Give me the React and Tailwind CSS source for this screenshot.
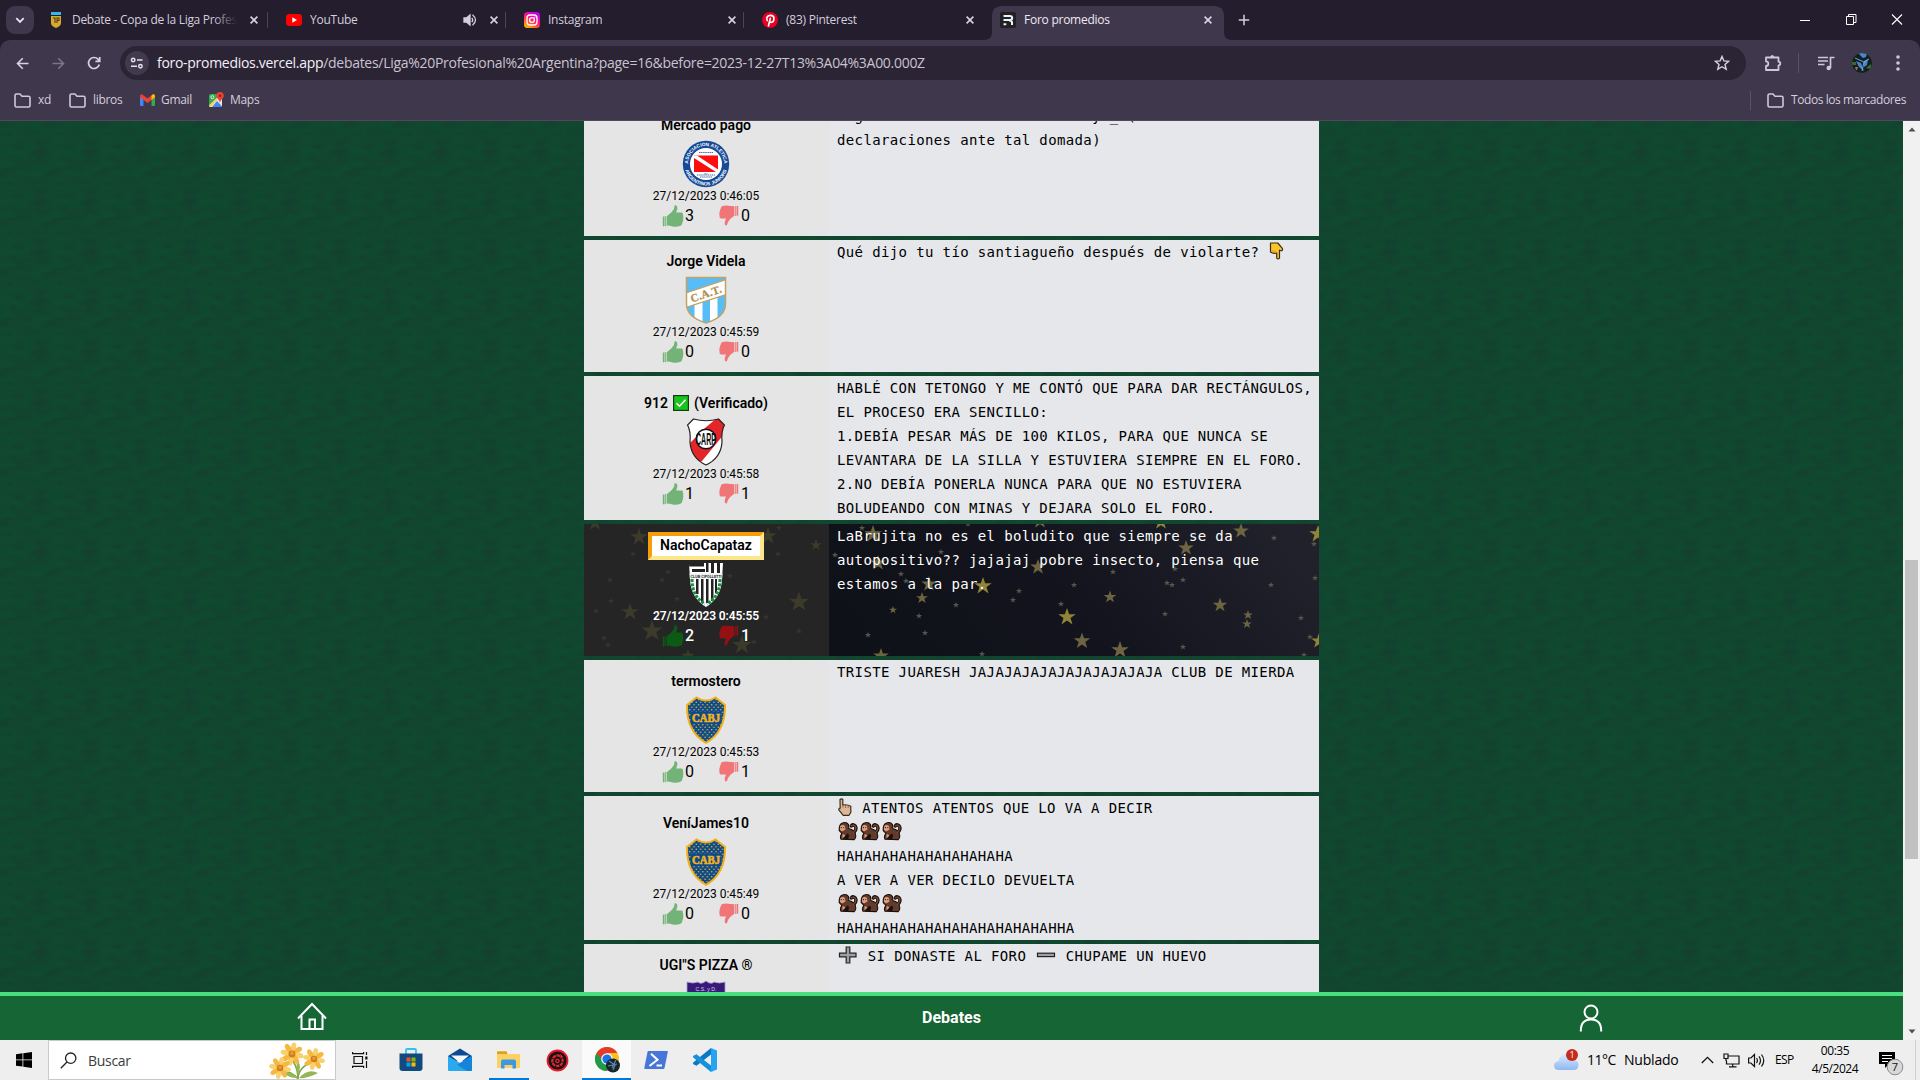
import React from "react";

/* ---------- browser chrome ---------- */

const FAVICONS = {
  liga: (
    <svg width="12" height="16" viewBox="0 0 12 16">
      <rect x="1" y="0" width="10" height="3" fill="#35b6e6" />
      <path d="M1 4h10v7q0 3-5 5q-5-2-5-5z" fill="#d9a92c" />
      <path d="M3 6h2v5M7 11V6h2v2.500H7" stroke="#4b3f1c" strokeWidth="1.1" fill="none" />
    </svg>
  ),
  youtube: (
    <svg width="16" height="16" viewBox="0 0 16 16">
      <rect x="0" y="2" width="16" height="12" rx="3.4" fill="#f00" />
      <path d="M6.3 5.2v5.6L11 8z" fill="#fff" />
    </svg>
  ),
  instagram: (
    <svg width="16" height="16" viewBox="0 0 16 16">
      <defs>
        <linearGradient id="ig" x1="0.1" y1="1" x2="0.7" y2="0">
          <stop offset="0" stopColor="#ffc800" />
          <stop offset="0.35" stopColor="#ff5a1f" />
          <stop offset="0.6" stopColor="#ff0e86" />
          <stop offset="1" stopColor="#b800f0" />
        </linearGradient>
      </defs>
      <rect width="16" height="16" rx="3.5" fill="url(#ig)" />
      <rect x="3" y="3" width="10" height="10" rx="3" fill="none" stroke="#fff" strokeWidth="1.3" />
      <circle cx="8" cy="8" r="2.4" fill="none" stroke="#fff" strokeWidth="1.3" />
      <circle cx="10.9" cy="5.1" r=".7" fill="#fff" />
    </svg>
  ),
  pinterest: (
    <svg width="16" height="16" viewBox="0 0 16 16">
      <circle cx="8" cy="8" r="8" fill="#e60023" />
      <path
        d="M5.2 8.6C3.6 5.6 6 3.4 8.3 3.4c2.2 0 3.6 1.4 3.6 3.2 0 2.200-1.200 3.700-2.700 3.700-.9 0-1.500-.5-1.700-1M8.300 6.400L6.500 13.800"
        stroke="#fff"
        strokeWidth="1.7"
        fill="none"
        strokeLinecap="round"
      />
    </svg>
  ),
  foro: (
    <svg width="16" height="16" viewBox="0 0 16 16">
      <rect width="16" height="16" rx="2" fill="#212121" />
      <path d="M3.500 4h6.200q2.500 0 2.500 2t-2.500 2H3.500M3.500 12.200h2.800M9 8.500q3 0 3 2v2.500" stroke="#e8f2ff" strokeWidth="2" fill="none" />
    </svg>
  ),
};

const CloseX = () => (
  <svg width="16" height="16" viewBox="0 0 16 16" className="shrink-0">
    <path d="M4.600 4.600l6.800 6.800M11.400 4.600l-6.800 6.800" stroke="#d9d3e0" strokeWidth="1.6" />
  </svg>
);

function Tab({ icon, title, active, audio, sep, fade }) {
  return (
    <div className="relative flex h-[34px] w-[238px] shrink-0 items-center pb-[6px] pl-2 pr-[14px]">
      {active && (
        <svg className="absolute -left-2 top-0" width="248" height="34" viewBox="0 0 248 34">
          <path d="M0 34q8 0 8-8V10Q8 0 18 0H230q10 0 10 10V26q0 8 8 8z" fill="#3f374b" />
        </svg>
      )}
      <div className="relative flex w-4 justify-center">{FAVICONS[icon]}</div>
      <div className={"relative ml-2 min-w-0 overflow-hidden whitespace-nowrap text-[12px] leading-4 " + (active ? "text-[#efe9f5]" : "text-[#d5cede]")}>
        <span className={fade ? "tracking-[-0.29px]" : "tracking-[-0.25px]"}>{title}</span>
        {fade && <span className="absolute right-0 top-0 h-4 w-6 bg-gradient-to-r from-transparent to-[#231d2d]" />}
      </div>
      <div className={"flex shrink-0 items-center " + (fade ? "ml-[9px]" : "ml-auto")}>
        {audio && (
          <svg width="14" height="14" viewBox="0 0 14 14" className="mr-[9px]" fill="none" stroke="#d5cede" strokeWidth="1.300">
            <path d="M1 5h2.500L7 2v10L3.500 9H1z" fill="#d5cede" />
            <path d="M8.800 4.800q1.800 2.200 0 4.400M9.500 1.800q6 5.200 0 10.400" />
          </svg>
        )}
        <span className="relative">
          <CloseX />
        </span>
      </div>
      {sep && <span className="absolute right-[10px] top-[6px] h-4 w-px bg-[#4b4356]" />}
    </div>
  );
}

const Folder = () => (
  <svg width="17" height="15" viewBox="0 0 17 15" fill="none" stroke="#d0c9d8" strokeWidth="1.600">
    <path d="M1 2.500q0-1.500 1.500-1.500H6l2 2.200h6.500q1.500 0 1.500 1.500v7.800q0 1.500-1.500 1.500h-12Q1 14 1 12.500z" strokeLinejoin="round" />
  </svg>
);

function TabStrip() {
  return (
    <div className="flex h-10 items-start bg-[#231d2d] pl-[6px] pt-[6px]">
      <div className="mr-[6px] flex h-7 w-7 items-center justify-center rounded-[9px] bg-[#3f374b]">
        <svg width="10" height="7" viewBox="0 0 10 7">
          <path d="M1.300 1.200L5 4.900l3.700-3.700" stroke="#e9e4ef" strokeWidth="1.800" fill="none" />
        </svg>
      </div>
      <Tab icon="liga" title="Debate - Copa de la Liga Profes" sep fade />
      <Tab icon="youtube" title="YouTube" audio sep />
      <Tab icon="instagram" title="Instagram" sep />
      <Tab icon="pinterest" title="(83) Pinterest" />
      <Tab icon="foro" title="Foro promedios" active />
      <svg width="12" height="12" viewBox="0 0 12 12" className="ml-2 mt-2">
        <path d="M6 .8v10.400M.8 6h10.400" stroke="#d5cede" strokeWidth="1.500" />
      </svg>
      <div className="ml-auto flex items-center gap-[34px] pr-[17px] pt-[7px]">
        <svg width="12" height="13" viewBox="0 0 12 13" className="mr-[1px]">
          <path d="M1 7.500h10" stroke="#fff" />
        </svg>
        <svg width="11" height="13" viewBox="0 0 11 13" fill="none" stroke="#fff">
          <path d="M.5 3.500h7v8h-7zM2.500 3V1.500h7.500v8H8" />
        </svg>
        <svg width="12" height="13" viewBox="0 0 12 13">
          <path d="M1 1.500l10 10M11 1.500l-10 10" stroke="#fff" strokeWidth="1.100" />
        </svg>
      </div>
    </div>
  );
}

function Toolbar() {
  return (
    <div className="flex h-[46px] items-center rounded-t-[10px] bg-[#3f374b] pl-4">
      <svg width="13" height="13" viewBox="0 0 13 13" fill="none" stroke="#d9d3e0" strokeWidth="1.600">
        <path d="M12.500 6.500H1.500M6.800 1.200L1.500 6.500l5.300 5.300" />
      </svg>
      <svg width="13" height="13" viewBox="0 0 13 13" fill="none" stroke="#7c7487" strokeWidth="1.600" className="ml-[23px]">
        <path d="M.5 6.500h11M6.200 1.200l5.300 5.300-5.300 5.300" />
      </svg>
      <svg width="14" height="14" viewBox="0 0 14 14" fill="none" stroke="#d9d3e0" strokeWidth="1.700" className="ml-[22px]">
        <path d="M12.300 8.500A5.500 5.500 0 1 1 11 3.200L12.500 5M12.700 1v4.300H8.400" />
      </svg>
      <div className="ml-[19px] flex h-[34px] w-[1626px] items-center rounded-full bg-[#2b2435] pl-[5px] pr-4">
        <div className="flex h-6 w-6 items-center justify-center rounded-full bg-[#413a4e]">
          <svg width="14" height="12" viewBox="0 0 14 12" fill="none" stroke="#e6e1ec" strokeWidth="1.500">
            <circle cx="3.200" cy="3" r="1.700" />
            <path d="M7 3h5.500M1 9.200h6" />
            <circle cx="10.400" cy="9.200" r="1.700" />
          </svg>
        </div>
        <span className="ml-2 whitespace-nowrap text-[14px] leading-5 tracking-[-0.29px] text-[#c9c3cf]">
          <span className="text-[#f4f0f8]">foro-promedios.vercel.app</span>
          /debates/Liga%20Profesional%20Argentina?page=16&amp;before=2023-12-27T13%3A04%3A00.000Z
        </span>
        <svg width="16" height="16" viewBox="0 0 16 16" className="ml-auto" fill="none" stroke="#d9d3e0" strokeWidth="1.400">
          <path d="M8 1.400l1.900 4.500 4.800.4-3.700 3.200 1.200 4.800L8 11.700l-4.200 2.600L5 9.500 1.300 6.300l4.800-.4z" />
        </svg>
      </div>
      <svg width="18" height="18" viewBox="0 0 18 18" className="ml-[18px]" fill="none" stroke="#cfc7da" strokeWidth="1.800">
        <path d="M2 3.500h12.500v4.200a1.800 1.800 0 0 1 0 3.600V16H2v-4a2.300 2.300 0 0 0 0-4.600z" strokeLinejoin="round" />
        <path d="M6.800 3a1.500 1.500 0 0 1 3 0" fill="#cfc7da" strokeWidth="1" />
      </svg>
      <span className="ml-[16px] h-5 w-px bg-[#5a5267]" />
      <svg width="17" height="15" viewBox="0 0 17 15" className="ml-[19px]" fill="none" stroke="#cfc7da" strokeWidth="1.700">
        <path d="M0 1.500h10M0 5h10M0 8.500h6.500M12.500 12V1.500h4" />
        <circle cx="10.700" cy="12" r="2.200" fill="#cfc7da" stroke="none" />
      </svg>
      <svg width="20" height="20" viewBox="0 0 20 20" className="ml-[17px]">
        <defs>
          <clipPath id="av">
            <circle cx="10" cy="10" r="10" />
          </clipPath>
        </defs>
        <g clipPath="url(#av)">
          <rect width="20" height="20" fill="#12211f" />
          <path d="M6 0h9l-1 4-3 1zM4 8l5 2 3 8-5-4zM12 8l4-2-1 6-3 2z" fill="#4a86cf" />
          <path d="M3 5l9 4 5-3M12 9l-2 9" stroke="#7fb0ea" strokeWidth=".9" fill="none" />
          <path d="M0 9h4v3H0zM14 15l5-4v5z" fill="#3d6b2c" />
          <path d="M3 14h3l-1 3H4z" fill="#b46a4b" />
        </g>
      </svg>
      <svg width="4" height="16" viewBox="0 0 4 16" className="ml-6" fill="#cfc7da">
        <circle cx="2" cy="2" r="1.800" />
        <circle cx="2" cy="8" r="1.800" />
        <circle cx="2" cy="14" r="1.800" />
      </svg>
    </div>
  );
}

function BookmarkBar() {
  return (
    <div className="flex h-[35px] items-center border-b border-[#51495a] bg-[#3f374b] pb-[6px] pl-[14px] pr-[14px] text-[12px] leading-4 tracking-[-0.3px] text-[#d5cede]">
      <Folder />
      <span className="ml-[7px] w-[31px]">xd</span>
      <Folder />
      <span className="ml-[7px] w-[47px]">libros</span>
      <svg width="15" height="12" viewBox="0 0 15 12">
        <path d="M0 1.500V11q0 1 1 1h2.500V4.500z" fill="#4285f4" />
        <path d="M15 1.500V11q0 1-1 1h-2.500V4.500z" fill="#34a853" />
        <path d="M0 2Q.2 0 2 .3L7.500 4.600 13 .3Q14.800 0 15 2v1.200L7.500 9 0 3.200z" fill="#ea4335" />
        <path d="M11.500 1.500L13 .3Q14.800 0 15 2v1.200l-3.500 2.700z" fill="#fbbc04" />
      </svg>
      <span className="ml-[6px] w-[48px]">Gmail</span>
      <svg width="15" height="16" viewBox="0 0 15 16">
        <rect x="0" y="2" width="13" height="13" rx="1.500" fill="#34a853" />
        <path d="M0 13.500L12 2h1v12q0 1-1 1H1.500z" fill="#e8eaed" />
        <path d="M8 9l5.200 5.500q-.3.500-1.200.5H3z" fill="#4285f4" />
        <path d="M0 13.500l7-7 1.500 1.500-7 7Q0 15 0 13.500z" fill="#fbd04b" />
        <path d="M11 0a3.800 3.800 0 0 1 3.800 3.800c0 2.600-3.300 3.600-3.800 7.200-.5-3.600-3.800-4.600-3.800-7.200A3.800 3.800 0 0 1 11 0z" fill="#ea4335" />
        <circle cx="11" cy="3.800" r="1.300" fill="#8c2019" />
        <circle cx="3.400" cy="5.200" r="1.500" fill="none" stroke="#fff" strokeWidth=".8" />
      </svg>
      <span className="ml-[6px]">Maps</span>
      <span className="ml-auto h-[19px] w-px bg-[#5a5267]" />
      <span className="ml-4 flex">
        <Folder />
      </span>
      <span className="ml-[7px] w-[115px] whitespace-nowrap tracking-[-0.42px]">Todos los marcadores</span>
    </div>
  );
}

/* ---------- club crests ---------- */

const CREST_FONT = "'Liberation Serif', serif";

const Crests = {
  argentinos: (
    <svg width="48" height="48" viewBox="0 0 48 48">
      <circle cx="24" cy="24" r="23.200" fill="#154a96" />
      <circle cx="24" cy="24" r="16" fill="#fff" />
      <defs>
        <path id="arcTop" d="M6 24a18 18 0 0 1 36 0" />
        <path id="arcBottom" d="M2.500 24a21.500 21.500 0 0 0 43 0" />
      </defs>
      <g fill="#fff" fontFamily="'Liberation Sans', sans-serif" fontWeight="700" fontSize="5">
        <text textAnchor="middle" fontSize="4.800"><textPath href="#arcTop" startOffset="50%">ASOCIACION ATLETICA</textPath></text>
        <text textAnchor="middle" fontSize="4.800"><textPath href="#arcBottom" startOffset="50%">ARGENTINOS JUNIORS</textPath></text>
      </g>
      <rect x="12" y="15.500" width="24" height="16.500" fill="#fb0d10" />
      <path d="M12 15.500h3l21 14V32h-2L12 18z" fill="#fff" />
      <path d="M17 12.500h14M22.500 33.800h3M15 35h18M18 37h12" stroke="#154a96" strokeWidth=".8" strokeDasharray="1.500 .6" />
    </svg>
  ),
  tucuman: (
    <svg width="48" height="48" viewBox="0 0 48 48">
      <defs>
        <clipPath id="cat"><path d="M4.500 1.500h39V28q0 13-19.500 19Q4.500 41 4.500 28z" /></clipPath>
      </defs>
      <g clipPath="url(#cat)">
        <rect width="48" height="48" fill="#58bdf7" />
        <path d="M12.500 20h8v28h-8zM28 18h7.500v28H28z" fill="#fff" />
        <path d="M4 17L44 3.500v15L4 31.500z" fill="#fff" />
        <path d="M4 17L44 3.500M4 31.500L44 18.500" stroke="#c0a367" strokeWidth="1.300" />
      </g>
      <path d="M4.500 1.500h39V28q0 13-19.500 19Q4.500 41 4.500 28z" fill="none" stroke="#c0a367" strokeWidth="1.500" />
      <text x="24" y="21.500" transform="rotate(-19 24 18)" textAnchor="middle" fontFamily={CREST_FONT} fontWeight="700" fontSize="11" textLength="32" fill="#b28f4c" stroke="#b28f4c" strokeWidth=".3">C.A.T.</text>
    </svg>
  ),
  river: (
    <svg width="48" height="48" viewBox="0 0 48 48">
      <defs>
        <clipPath id="carp"><path d="M11.500 1Q24 4.500 36.500 1L42.500 7Q39 13 40 24 39 40 24 47 9 40 8 24 9 13 5.500 7z" /></clipPath>
      </defs>
      <g clipPath="url(#carp)">
        <rect width="48" height="48" fill="#fff" />
        <path d="M23 10L35 0h12v10L20 43l-6 3-9-18z" fill="#e4262a" />
      </g>
      <path d="M11.500 1Q24 4.500 36.500 1L42.500 7Q39 13 40 24 39 40 24 47 9 40 8 24 9 13 5.500 7z" fill="none" stroke="#222" strokeWidth="1.200" />
      <circle cx="24" cy="21" r="9.800" fill="#fff" stroke="#111" strokeWidth="1.400" />
      <text x="24" y="27" textAnchor="middle" fontFamily="'Liberation Sans', sans-serif" fontWeight="700" fontSize="17" textLength="20" lengthAdjust="spacingAndGlyphs" fill="#111">CARP</text>
    </svg>
  ),
  cipolletti: (
    <svg width="48" height="48" viewBox="0 0 48 48">
      <defs>
        <clipPath id="cip"><path d="M7 3L41 3l-1 17Q39 38 24 47 9 38 8 20z" /></clipPath>
      </defs>
      <g clipPath="url(#cip)">
        <rect width="48" height="48" fill="#fff" />
        <path d="M7 0h15v6.500H7zM24 0h2.500v12H24zM29 0h3v13h-3zM35 0h3v13h-3zM10 9h13v3H10z" fill="#222" />
        <path d="M14 19h2.500v15H14zM19 19h2.500v23H19zM24 19h2.500v24H24zM29 19h2.500v22H29zM33 19h2v14h-2z" fill="#222" />
        <path d="M10 19q0 18 13 25M38 19q0 18-13 25" stroke="#1d8b45" strokeWidth="3.200" strokeDasharray="3 1.200" fill="none" />
        <rect x="7" y="13.500" width="34" height="5" fill="#eee" />
      </g>
      <text x="24" y="17.800" textAnchor="middle" fontFamily="'Liberation Sans', sans-serif" fontWeight="700" fontSize="4.200" textLength="31" lengthAdjust="spacingAndGlyphs" fill="#222">CLUB CIPOLLETTI</text>
    </svg>
  ),
  boca: (
    <svg width="48" height="48" viewBox="0 0 48 48">
      <defs>
        <pattern id="stars" width="4.400" height="5" patternUnits="userSpaceOnUse">
          <circle cx="1.100" cy="1.200" r=".8" fill="#e5b52c" />
          <circle cx="3.300" cy="3.700" r=".8" fill="#e5b52c" />
        </pattern>
      </defs>
      <path d="M14.500 1.500Q24 7.500 33.500 1.500L43 9Q43.500 36 24 46.800 4.500 36 5 9z" fill="#0b4a8c" />
      <path d="M14.500 1.500Q24 7.500 33.500 1.500L43 9Q43.500 36 24 46.800 4.500 36 5 9z" fill="url(#stars)" stroke="#f2b01c" strokeWidth="2" />
      <rect x="9" y="16" width="30" height="11" fill="#0b4a8c" />
      <text x="24" y="25.500" textAnchor="middle" fontFamily={CREST_FONT} fontWeight="700" fontSize="12.500" textLength="28" lengthAdjust="spacingAndGlyphs" fill="#f2b01c" stroke="#f2b01c" strokeWidth=".7">CABJ</text>
    </svg>
  ),
  dragones: (
    <svg width="48" height="48" viewBox="0 0 48 48">
      <path d="M5 2q6 2 11 0 3 3 8-1 5 4 8 1 5 2 11 0v30q-4 12-19 16Q8 44 5 32z" fill="#371a78" />
      <path d="M5 2q6 2 11 0 3 3 8-1 5 4 8 1 5 2 11 0M5 2v24M43 2v24" stroke="#a79bd0" strokeWidth=".8" fill="none" />
      <path d="M9 13h30" stroke="#8d7cc0" strokeWidth=".6" />
      <text x="24" y="11" textAnchor="middle" fontFamily="'Liberation Sans', sans-serif" fontSize="5.200" fill="#d8cff0">C.S. y D.</text>
    </svg>
  ),
};

/* ---------- emoji glyphs ---------- */

const PointHand = ({ fill }) => (
  <svg width="16.500" height="18" viewBox="0 0 16.500 18" className="inline-block align-[-3px]">
    <path
      d="M3 1.500q1.600-1.400 2.800 0V7q4.500-.8 8 1.200v6.300l-1.800 2.800H6.200L2 12.200q-.8-2 1.200-2z"
      fill={fill}
      stroke="#3b2f1c"
      strokeWidth="1.200"
      strokeLinejoin="round"
    />
    <path d="M6 7.200v2.500M8.600 7.200V10M11.200 7.600V10" stroke="#6b5238" strokeWidth=".7" />
  </svg>
);

const PointDown = () => (
  <svg width="16.500" height="18" viewBox="0 0 16.500 18" className="inline-block align-[-3px]">
    <path
      d="M2.500 1h7.300l4.500 5.300q.8 2-1 2.500l-1.800-.6v8q-1.400 1.600-2.800 0V11q-3.600 1-6.200-1z"
      fill="#fcc32c"
      stroke="#3b2f1c"
      strokeWidth="1.200"
      strokeLinejoin="round"
    />
    <path d="M5 8v2.300M7 8.300v2.300" stroke="#c98b18" strokeWidth=".7" />
  </svg>
);

const Monkey = () => (
  <svg width="22" height="20" viewBox="0 0 22 20" className="inline-block align-[-4px]">
    <path d="M16.500 12q3.800-3.500 1.800-7-2.800-2.600-4 0" fill="none" stroke="#1a100b" strokeWidth="3.400" strokeLinecap="round" />
    <path d="M4 18.300q-1.500-3 1-6L2.200 9.500Q2 4 4.500 2.500 9 0 11.500 3.500l.3 4q7 2 7 7.500 0 2.500-1.500 3.600z" fill="#623b2c" stroke="#1a100b" strokeWidth="1.100" strokeLinejoin="round" />
    <path d="M16.300 11.800q3.800-3.500 2-6.600-2.400-2-3.800-.3" fill="none" stroke="#7a4a37" strokeWidth="1.300" strokeLinecap="round" />
    <path d="M3.200 5q2.500-2 4.800 0l.5 3.500-3.500 2-2-1.500zM5.500 13l2.500 1v2.500l-2.500.8z" fill="#dd9f7d" />
    <path d="M4.500 6v1.200M6.800 6v1.200M6 17.500l4.500-4.500 1.300 1-1 4z" stroke="#1a100b" strokeWidth=".8" fill="#1a100b" />
  </svg>
);

const Plus = () => (
  <svg width="22" height="20" viewBox="0 0 22 20" className="inline-block align-[-4px]">
    <path d="M9.200 2h3.600v6.200H19v3.600h-6.200V18H9.200v-6.200H2.500V8.200h6.700z" fill="#a0a0a0" stroke="#222" strokeWidth="1.200" />
  </svg>
);

const Minus = () => (
  <svg width="22" height="20" viewBox="0 0 22 20" className="inline-block align-[-4px]">
    <rect x="2.500" y="8.200" width="17" height="3.400" fill="#a0a0a0" stroke="#222" strokeWidth="1.200" />
  </svg>
);

const Check = () => (
  <svg width="16" height="16" viewBox="0 0 16 16" className="mx-[5px] inline-block align-[-3px]">
    <rect x=".6" y=".6" width="14.800" height="14.800" fill="#1ac31e" stroke="#163d12" strokeWidth="1.200" />
    <path d="M3.500 8.200l3 3 6-6.500" stroke="#fff" strokeWidth="1.500" fill="none" />
  </svg>
);

/* ---------- posts ---------- */

const ThumbUp = ({ color }) => (
  <svg width="22" height="22" viewBox="0 0 22 22" fill={color}>
    <path d="M.8 11.500h1.700v9.500q-.8.800-1.700 0zM3.200 11h1v10.300h-1z" />
    <path d="M4.800 11.200L9.800 7l2.200-3.200L12.500.8q.4-1 1.300-.6 2 1 1.500 3.700L14.200 7.600h5.600q1.500.5 1 2.200.8 1 .3 2.400.6 1.200-.1 2.400.4 1.400-.6 2.500.2 2.200-1.400 3.400-3 1.500-8.500 1.100-2.200-.9-5.700-1z" />
  </svg>
);

const ThumbDown = ({ color }) => (
  <svg width="20" height="22" viewBox="0 0 20 22" fill={color}>
    <path d="M17.500 1h1.700v9.500q-.8.500-1.700 0zM15.800 1h1v10h-1z" />
    <path d="M15.200 1.300v9.500l-4 3.200-2.200 3-1 3q-.6.800-1.500.3-1.300-1.300-.6-3.700L7 13.500H1.700q-1.600-.6-1.100-2.400-.6-1-.1-2.300-.5-1.300.4-2.500-.3-1.300.7-2.300Q1.700 1.900 3.300 1q4-.9 8 0z" />
  </svg>
);

const BIG_STARS = [
  [289, 10, 9, 0], [456, -3, 8, 0], [577, -2, 8, 1], [657, 7, 8, 0], [734, 10, 9, 1], [602, 24, 8, 0], [294, 39, 8, 0],
  [454, 43, 8, 0], [345, 60, 8, 0], [399, 62, 9, 1], [338, 74, 6, 0], [526, 73, 6.5, 0], [309, 86, 4, 0], [483, 93, 9, 1],
  [636, 81, 7.5, 0], [664, 91, 5, 0], [663, 100, 5, 0], [498, 117, 8.5, 0], [536, 126, 9, 0], [297, 132, 8, 0], [735, 117, 8, 1],
  [11, -1, 8, 2], [55, 13, 9, 2], [184, 12, 9, 2], [232, 21, 6, 2], [46, 88, 9, 2], [68, 107, 11, 2], [215, 78, 10.500, 2],
  [158, 121, 10, 2], [104, 132, 7, 2],
];

const SMALL_STARS = [
  [251, 31], [278, 4], [325, 10], [317, 50], [322, 57], [357, 28], [372, 81], [435, 67], [429, 76], [477, 80], [490, 61],
  [529, 48], [591, 45], [599, 56], [583, 59], [588, 61], [581, 90], [690, 14], [730, 20], [731, 54], [687, 61], [717, 94],
  [726, 113], [720, 131], [599, 123], [398, 130], [341, 109], [335, 92], [284, 111], [384, 0], [49, 30], [26, 56], [78, 56],
  [84, 48], [12, 87], [27, 77], [93, 75], [20, 114], [24, 121], [195, 4], [194, 30], [182, 93], [215, 107], [170, 118], [146, 52],
];

const STAR_FILL = ["#6d6540", "#8f8438", "#3b3a2b"];
const STAR_PATH = "M0-10L2.400-3.100 9.700-3.100 3.900 1.200 6.100 8.200 0 4 -6.100 8.200 -3.900 1.200 -9.700-3.100 -2.400-3.100Z";

function StarField() {
  return (
    <svg className="absolute inset-0" width="735" height="132" viewBox="0 0 735 132">
      <defs>
        <linearGradient id="night" x1="0" y1=".6" x2="1" y2=".4">
          <stop offset="0" stopColor="#0f1119" />
          <stop offset=".5" stopColor="#13141d" />
          <stop offset="1" stopColor="#20212a" />
        </linearGradient>
      </defs>
      <rect width="245" height="132" fill="#252525" />
      <rect x="245" width="490" height="132" fill="url(#night)" />
      {BIG_STARS.map(([x, y, r, c], i) => (
        <path key={i} d={STAR_PATH} fill={STAR_FILL[c]} transform={`translate(${x} ${y}) scale(${r / 10})`} />
      ))}
      {SMALL_STARS.map(([x, y], i) => (
        <path key={i} d={STAR_PATH} fill={x < 245 ? "#353530" : "#55564c"} transform={`translate(${x} ${y}) scale(.32)`} />
      ))}
    </svg>
  );
}

const POSTS = [
  { name: "Mercado pago", crest: "argentinos", time: "0:46:05", up: 3, down: 0, lines: ["Seguro era eso lo mismo cada y _ (sin", "declaraciones ante tal domada)"] },
  { name: "Jorge Videla", crest: "tucuman", time: "0:45:59", up: 0, down: 0, lines: [<>Qué dijo tu tío santiagueño después de violarte? <PointDown /></>] },
  {
    name: <>912<Check />(Verificado)</>,
    crest: "river",
    time: "0:45:58",
    up: 1,
    down: 1,
    lines: [
      "HABLÉ CON TETONGO Y ME CONTÓ QUE PARA DAR RECTÁNGULOS,",
      "EL PROCESO ERA SENCILLO:",
      "1.DEBÍA PESAR MÁS DE 100 KILOS, PARA QUE NUNCA SE",
      "LEVANTARA DE LA SILLA Y ESTUVIERA SIEMPRE EN EL FORO.",
      "2.NO DEBÍA PONERLA NUNCA PARA QUE NO ESTUVIERA",
      "BOLUDEANDO CON MINAS Y DEJARA SOLO EL FORO.",
    ],
  },
  {
    name: "NachoCapataz",
    crest: "cipolletti",
    time: "0:45:55",
    up: 2,
    down: 1,
    premium: true,
    lines: ["LaBrujita no es el boludito que siempre se da", "autopositivo?? jajajaj pobre insecto, piensa que", "estamos a la par."],
  },
  { name: "termostero", crest: "boca", time: "0:45:53", up: 0, down: 1, lines: ["TRISTE JUARESH JAJAJAJAJAJAJAJAJAJAJA CLUB DE MIERDA"] },
  {
    name: "VeníJames10",
    crest: "boca",
    time: "0:45:49",
    up: 0,
    down: 0,
    lines: [
      <><PointHand fill="#dcb596" /> ATENTOS ATENTOS QUE LO VA A DECIR</>,
      <><Monkey /><Monkey /><Monkey /></>,
      "HAHAHAHAHAHAHAHAHAHA",
      "A VER A VER DECILO DEVUELTA",
      <><Monkey /><Monkey /><Monkey /></>,
      "HAHAHAHAHAHAHAHAHAHAHAHAHHA",
    ],
  },
  { name: 'UGI"S PIZZA ®', crest: "dragones", time: "0:45:47", up: 0, down: 0, lines: [<><Plus /> SI DONASTE AL FORO <Minus /> CHUPAME UN HUEVO</>] },
];

function Post({ post }) {
  const p = post.premium;
  return (
    <article className={"relative flex min-h-[132px] shrink-0 overflow-hidden " + (p ? "text-white" : "text-black")}>
      {p && <StarField />}
      <div className={"relative flex w-[245px] flex-col items-center justify-center pr-px font-['Roboto',sans-serif] " + (p ? "" : "bg-[#e5e5e5]")}>
        <div
          className={
            "flex h-7 items-center justify-center whitespace-nowrap text-[14px] font-semibold leading-5 " +
            (p ? "w-[116px] border-4 border-b-[#fde68a] border-l-[#f59e0b] border-r-[#fde68a] border-t-[#f59e0b] bg-white text-black" : "pb-[2px]")
          }
        >
          <span className={p ? "-mt-[2px]" : ""}>{post.name}</span>
        </div>
        <div className="h-12 w-12">{Crests[post.crest]}</div>
        <div className={"h-4 whitespace-nowrap text-[12px] leading-4 " + (p ? "font-semibold tracking-[-0.1px]" : "")}>27/12/2023 {post.time}</div>
        <div className={"flex h-6 items-center text-[16px] leading-6 " + (p ? "font-medium" : "")}>
          <span className="flex w-[57px] items-center">
            <ThumbUp color={p ? "#0c5a14" : "#74b377"} />
            <span className="ml-[1px]">{post.up}</span>
          </span>
          <span className="flex w-[31px] items-center">
            <ThumbDown color={p ? "#931014" : "#f17476"} />
            <span className="ml-[2px]">{post.down}</span>
          </span>
        </div>
      </div>
      <div
        className={
          "relative flex-1 whitespace-pre pl-2 font-['DejaVu_Sans_Mono',monospace] text-[14px] leading-6 tracking-[0.37px] " +
          (p ? "" : "bg-[#e5e7eb]")
        }
      >
        {post.lines.map((l, i) => (
          <div key={i} className="h-6">{l}</div>
        ))}
      </div>
    </article>
  );
}

function TurfBackground() {
  return (
    <svg className="absolute inset-0" width="1903" height="871">
      <defs>
        <filter id="grain" x="0" y="0" width="1" height="1" colorInterpolationFilters="sRGB">
          <feTurbulence type="fractalNoise" baseFrequency="0.06 0.14" numOctaves="4" seed="4" stitchTiles="stitch" />
          <feColorMatrix values="0 0 0 0 0.1  0 0 0 0 0.2  0 0 0 0 0.18  0.8 0 0 0 -0.22" />
        </filter>
        <pattern id="turf" width="50" height="50" patternUnits="userSpaceOnUse">
          <rect width="50" height="50" fill="#0f4a2f" />
          <rect width="50" height="50" filter="url(#grain)" />
        </pattern>
      </defs>
      <rect width="1903" height="871" fill="url(#turf)" />
    </svg>
  );
}

function ForumPage() {
  return (
    <div className="flex h-[919px]">
      <div className="flex w-[1903px] flex-col">
        <main className="relative flex h-[871px] flex-col items-center overflow-hidden bg-[#10452e]">
          <TurfBackground />
          <div className="relative -mt-[17px] flex w-[735px] flex-col gap-1">
            {POSTS.map((p, i) => (
              <Post key={i} post={p} />
            ))}
          </div>
        </main>
        <nav className="grid h-12 grid-cols-3 items-center justify-items-center border-t-4 border-[#4ade80] bg-[#166534] text-white">
          <svg width="30" height="28" viewBox="0 0 30 28" fill="none" stroke="#fff" strokeWidth="2" className="-ml-[10px] -mt-[5px]">
            <path d="M1 16.500L15 2l14 14.500" />
            <path d="M4.500 13.500V27h21V13.500M12.500 26.500v-9h5.500v9" />
          </svg>
          <span className="font-['Roboto',sans-serif] text-[16px] font-bold leading-6">Debates</span>
          <svg width="24" height="28" viewBox="0 0 24 28" fill="none" stroke="#fff" strokeWidth="2" className="-mt-[1px] ml-[11px]">
            <circle cx="12" cy="8" r="6.500" />
            <path d="M1.800 27.500Q1.500 15.500 12 15.500T22.200 27.500" />
          </svg>
        </nav>
      </div>
      <div className="flex w-[17px] flex-col items-center bg-[#f1f1f1] py-[6px]">
        <svg width="8" height="5" viewBox="0 0 8 5"><path d="M4 .5L7.500 4.500H.5z" fill="#505050" /></svg>
        <div className="mt-[428px] h-[299px] w-[13px] bg-[#c1c1c1]" />
        <svg width="8" height="5" viewBox="0 0 8 5" className="mt-auto"><path d="M4 4.500L7.500.5H.5z" fill="#505050" /></svg>
      </div>
    </div>
  );
}

/* ---------- Windows taskbar ---------- */

const Flower = ({ x, y, s = 1 }) => (
  <g transform={`translate(${x} ${y}) scale(${s})`}>
    {[0, 45, 90, 135, 180, 225, 270, 315].map((a) => (
      <ellipse key={a} cx="0" cy="-6.500" rx="2.500" ry="4.600" fill={a % 90 ? "#f5b840" : "#f9d06a"} transform={`rotate(${a + 12})`} />
    ))}
    <circle r="3.300" fill="#d07c1c" />
    <circle r="1.800" cy="-.8" fill="#e89a30" />
  </g>
);

const TASK_ICONS = [
  <svg key="store" width="24" height="24" viewBox="0 0 24 24">
    <path d="M7 6V2q0-1 1-1h8q1 0 1 1v4" fill="none" stroke="#33c2f0" strokeWidth="1.800" />
    <path d="M.5 5.500h23V20q0 3-3 3h-17q-3 0-3-3z" fill="#124a80" />
    <path d="M7.500 9.500h4v4h-4z" fill="#f25022" />
    <path d="M12.500 9.500h4v4h-4z" fill="#7fba00" />
    <path d="M7.500 14.500h4v4h-4z" fill="#00a4ef" />
    <path d="M12.500 14.500h4v4h-4z" fill="#ffb900" />
  </svg>,
  <svg key="mail" width="24" height="24" viewBox="0 0 24 24">
    <path d="M0 8L12 .5 24 8v5H0z" fill="#0d4a94" />
    <path d="M3 7.500h18L12 15z" fill="#f4f6f9" />
    <path d="M0 8l12 7 12-7v14q0 1-1 1H1q-1 0-1-1z" fill="#2aa9ee" />
    <path d="M24 8L9 16.800 19 23h4q1 0 1-1z" fill="#1585d8" />
  </svg>,
  <svg key="files" width="23" height="20" viewBox="0 0 23 20">
    <path d="M0 2q0-1 1-1h8l2 3h11q1 0 1 1v13H0z" fill="#fbd261" />
    <path d="M0 1.500h10V4H0z" fill="#d9a021" />
    <path d="M4 18.500v-7q0-2 2-2h11q2 0 2 2v7h-3.500V15h-8v3.500z" fill="#3c98e0" />
  </svg>,
  <svg key="red" width="23" height="23" viewBox="0 0 23 23">
    <circle cx="11.500" cy="11.500" r="10" fill="#191315" stroke="#ea1c2c" strokeWidth="1.800" />
    <path d="M14 7.200q-4-2-6.500 1.300-2.500 4 .3 7.200 3.500 2.600 7.200 0 2.500-2.700 1.200-6" fill="none" stroke="#e92231" strokeWidth="2.200" strokeDasharray="3.500 .8" />
    <circle cx="11.500" cy="12" r="1.700" fill="none" stroke="#e92231" strokeWidth="1.200" />
    <path d="M14 5l3.500 3-3 1.500z" fill="#e92231" />
  </svg>,
  <svg key="chrome" width="26" height="26" viewBox="0 0 26 26">
    <circle cx="12" cy="12" r="12" fill="#fbc116" />
    <path d="M1.600 6A12 12 0 0 1 22.400 6H12L7 15z" fill="#e33b2e" />
    <path d="M1.600 6A12 12 0 0 0 12 24l5-9h-8z" fill="#229a4c" />
    <circle cx="12" cy="12" r="5.800" fill="#fff" />
    <circle cx="12" cy="12" r="4.600" fill="#1a73e8" />
    <circle cx="18" cy="18.500" r="7" fill="#1a2528" />
    <path d="M14 14l6 4-2 5M21 13l-4 8M13 19l9-2" stroke="#5b88b8" strokeWidth="1.200" fill="none" />
  </svg>,
  <svg key="ps" width="24" height="20" viewBox="0 0 24 20">
    <path d="M4.500 1h18.700q.8 0 .6.900L20.500 18q-.2 1-1.200 1H1q-.9 0-.7-.9L3.500 1.900Q3.700 1 4.500 1z" fill="#4676d8" />
    <path d="M7 3.800l6.500 6L5.500 16M12.500 15.500h5.500" stroke="#fff" strokeWidth="2" fill="none" />
  </svg>,
  <svg key="code" width="24" height="24" viewBox="0 0 24 24">
    <path d="M18 0l6 2.500v19L18 24z" fill="#26a4f2" />
    <path d="M18 0v6.500L3.500 17.800 0 16l.2-1.500z" fill="#0a79c4" />
    <path d="M18 24v-6.500L3.500 6.200 0 8l.2 1.500z" fill="#1491dc" />
  </svg>,
];

function Taskbar() {
  return (
    <div className="flex h-10 items-center bg-[#eeeeee] font-['Open_Sans','Noto_Sans',sans-serif] text-black">
      <div className="flex w-12 justify-center">
        <svg width="16" height="16" viewBox="0 0 16 16">
          <path d="M0 2.200l6.500-.9v6.200H0zM7.300 1.200L16 0v7.500H7.300zM0 8.300h6.500v6.300L0 13.700zM7.300 8.300H16V16l-8.700-1.200z" />
        </svg>
      </div>
      <div className="flex h-10 w-[288px] items-center border border-[#c9c9c9] bg-white pl-[11px] pr-[9px]">
        <svg width="17" height="17" viewBox="0 0 17 17" fill="none" stroke="#222" strokeWidth="1.300">
          <circle cx="10.700" cy="6.200" r="5.200" />
          <path d="M7 10L.8 16.200" />
        </svg>
        <span className="ml-[11px] mt-[1px] text-[14px] leading-5 tracking-[-0.3px] text-[#3b3b3b]">Buscar</span>
        <svg width="58" height="38" viewBox="0 0 58 38" className="ml-auto">
          <path d="M30 38Q30 28 25 20M30 38q0-12 16-18M30 38Q24 30 13 30" stroke="#7fa83f" strokeWidth="1.600" fill="none" />
          <path d="M30 37q-10 0-14-5 8-2 14 5zM31 37q8 1 19-5-10-5-19 5zM30 33q-3-8 0-13 4 6 0 13z" fill="#93b65a" />
          <Flower x={24} y={13} s={1.050} />
          <Flower x={46} y={18} />
          <Flower x={12} y={27} />
        </svg>
      </div>
      <svg width="16" height="16" viewBox="0 0 16 16" className="ml-4 mr-[18px]" fill="none" stroke="#111" strokeWidth="1.200">
        <path d="M2 4.500h8.500v7H2zM.6 0v1.700h11V0M.6 16v-1.700h11V16M14.500 0v3M14.500 9v7" />
        <path d="M13.200 4.500h2.300v3h-2.300z" fill="#111" stroke="none" />
      </svg>
      {TASK_ICONS.map((icon, i) => (
        <div
          key={i}
          className={
            "relative flex h-10 w-[49px] items-center justify-center " + (i === 4 ? "bg-[#fafafa] pl-[2px]" : "")
          }
        >
          {icon}
          {(i === 2 || i === 4) && <span className={"absolute bottom-0 h-[2px] bg-[#0078d7] " + (i === 4 ? "left-0 w-full" : "w-10")} />}
        </div>
      ))}
      <div className="ml-auto flex h-full items-center">
        <svg width="26" height="22" viewBox="0 0 26 22">
          <defs>
            <linearGradient id="cloud" x1="0" y1="0" x2="0" y2="1">
              <stop offset="0" stopColor="#dceafd" />
              <stop offset="1" stopColor="#8fb8f4" />
            </linearGradient>
          </defs>
          <path d="M5 21q-5 0-5-4.500 0-4 4.500-4.500 1-6 7-7 6 0 7.500 6 5.500 0 5.500 5t-5 5z" fill="url(#cloud)" />
          <circle cx="18" cy="6" r="6" fill="#c42b1c" />
          <text x="18" y="9.300" textAnchor="middle" fontSize="9" fill="#fff">1</text>
        </svg>
        <span className="ml-[7px] w-[37px] whitespace-nowrap text-[14px] leading-5 tracking-[-0.5px]">11°C</span>
        <span className="w-[77px] whitespace-nowrap text-[14px] leading-5 tracking-[-0.2px]">Nublado</span>
        <svg width="13" height="8" viewBox="0 0 13 8" fill="none" stroke="#111" strokeWidth="1.300">
          <path d="M.8 7L6.500 1.300 12.200 7" />
        </svg>
        <svg width="17" height="15" viewBox="0 0 17 15" className="ml-[9px]" fill="none" stroke="#111" strokeWidth="1.200">
          <path d="M5 3h11v8H3.500V7.500M9.700 11v2.800M6 13.900h7.500M1 1h4v4.500H1zM3 5.500V8" />
        </svg>
        <svg width="17" height="15" viewBox="0 0 17 15" className="ml-2" fill="none" stroke="#111" strokeWidth="1.200">
          <path d="M.6 5h2.300L6.500 1.500v12L2.900 10H.6zM8.500 5q1.800 2.500 0 5M11 3.300q3 4.200 0 8.400M13.500 1.500q4.500 6 0 12" />
        </svg>
        <span className="ml-[10px] w-[25px] text-[12px] leading-4 tracking-[-0.6px]">ESP</span>
        <div className="ml-2 flex w-[54px] flex-col items-center whitespace-nowrap text-[12px] leading-[18px] tracking-[-0.45px]">
          <span>00:35</span>
          <span>4/5/2024</span>
        </div>
        <svg width="26" height="26" viewBox="0 0 26 26" className="ml-[17px] mt-2">
          <path d="M0 1h16v12H10l-4 4v-4H0z" fill="#000" />
          <path d="M3 4.500h10M3 7.500h10M3 10.500h6" stroke="#fff" />
          <circle cx="16" cy="16" r="7.800" fill="#d8d8d8" stroke="#8a8a8a" />
          <text x="16" y="20" textAnchor="middle" fontSize="11" fill="#111">7</text>
        </svg>
        <span className="ml-[10px] mr-1 h-full w-px bg-[#cfcfcf]" />
      </div>
    </div>
  );
}

export default function App() {
  return (
    <div className="flex h-[1080px] w-[1920px] flex-col overflow-hidden bg-[#231d2d] font-['Open_Sans','Noto_Sans',sans-serif]">
      <TabStrip />
      <Toolbar />
      <BookmarkBar />
      <ForumPage />
      <Taskbar />
    </div>
  );
}
